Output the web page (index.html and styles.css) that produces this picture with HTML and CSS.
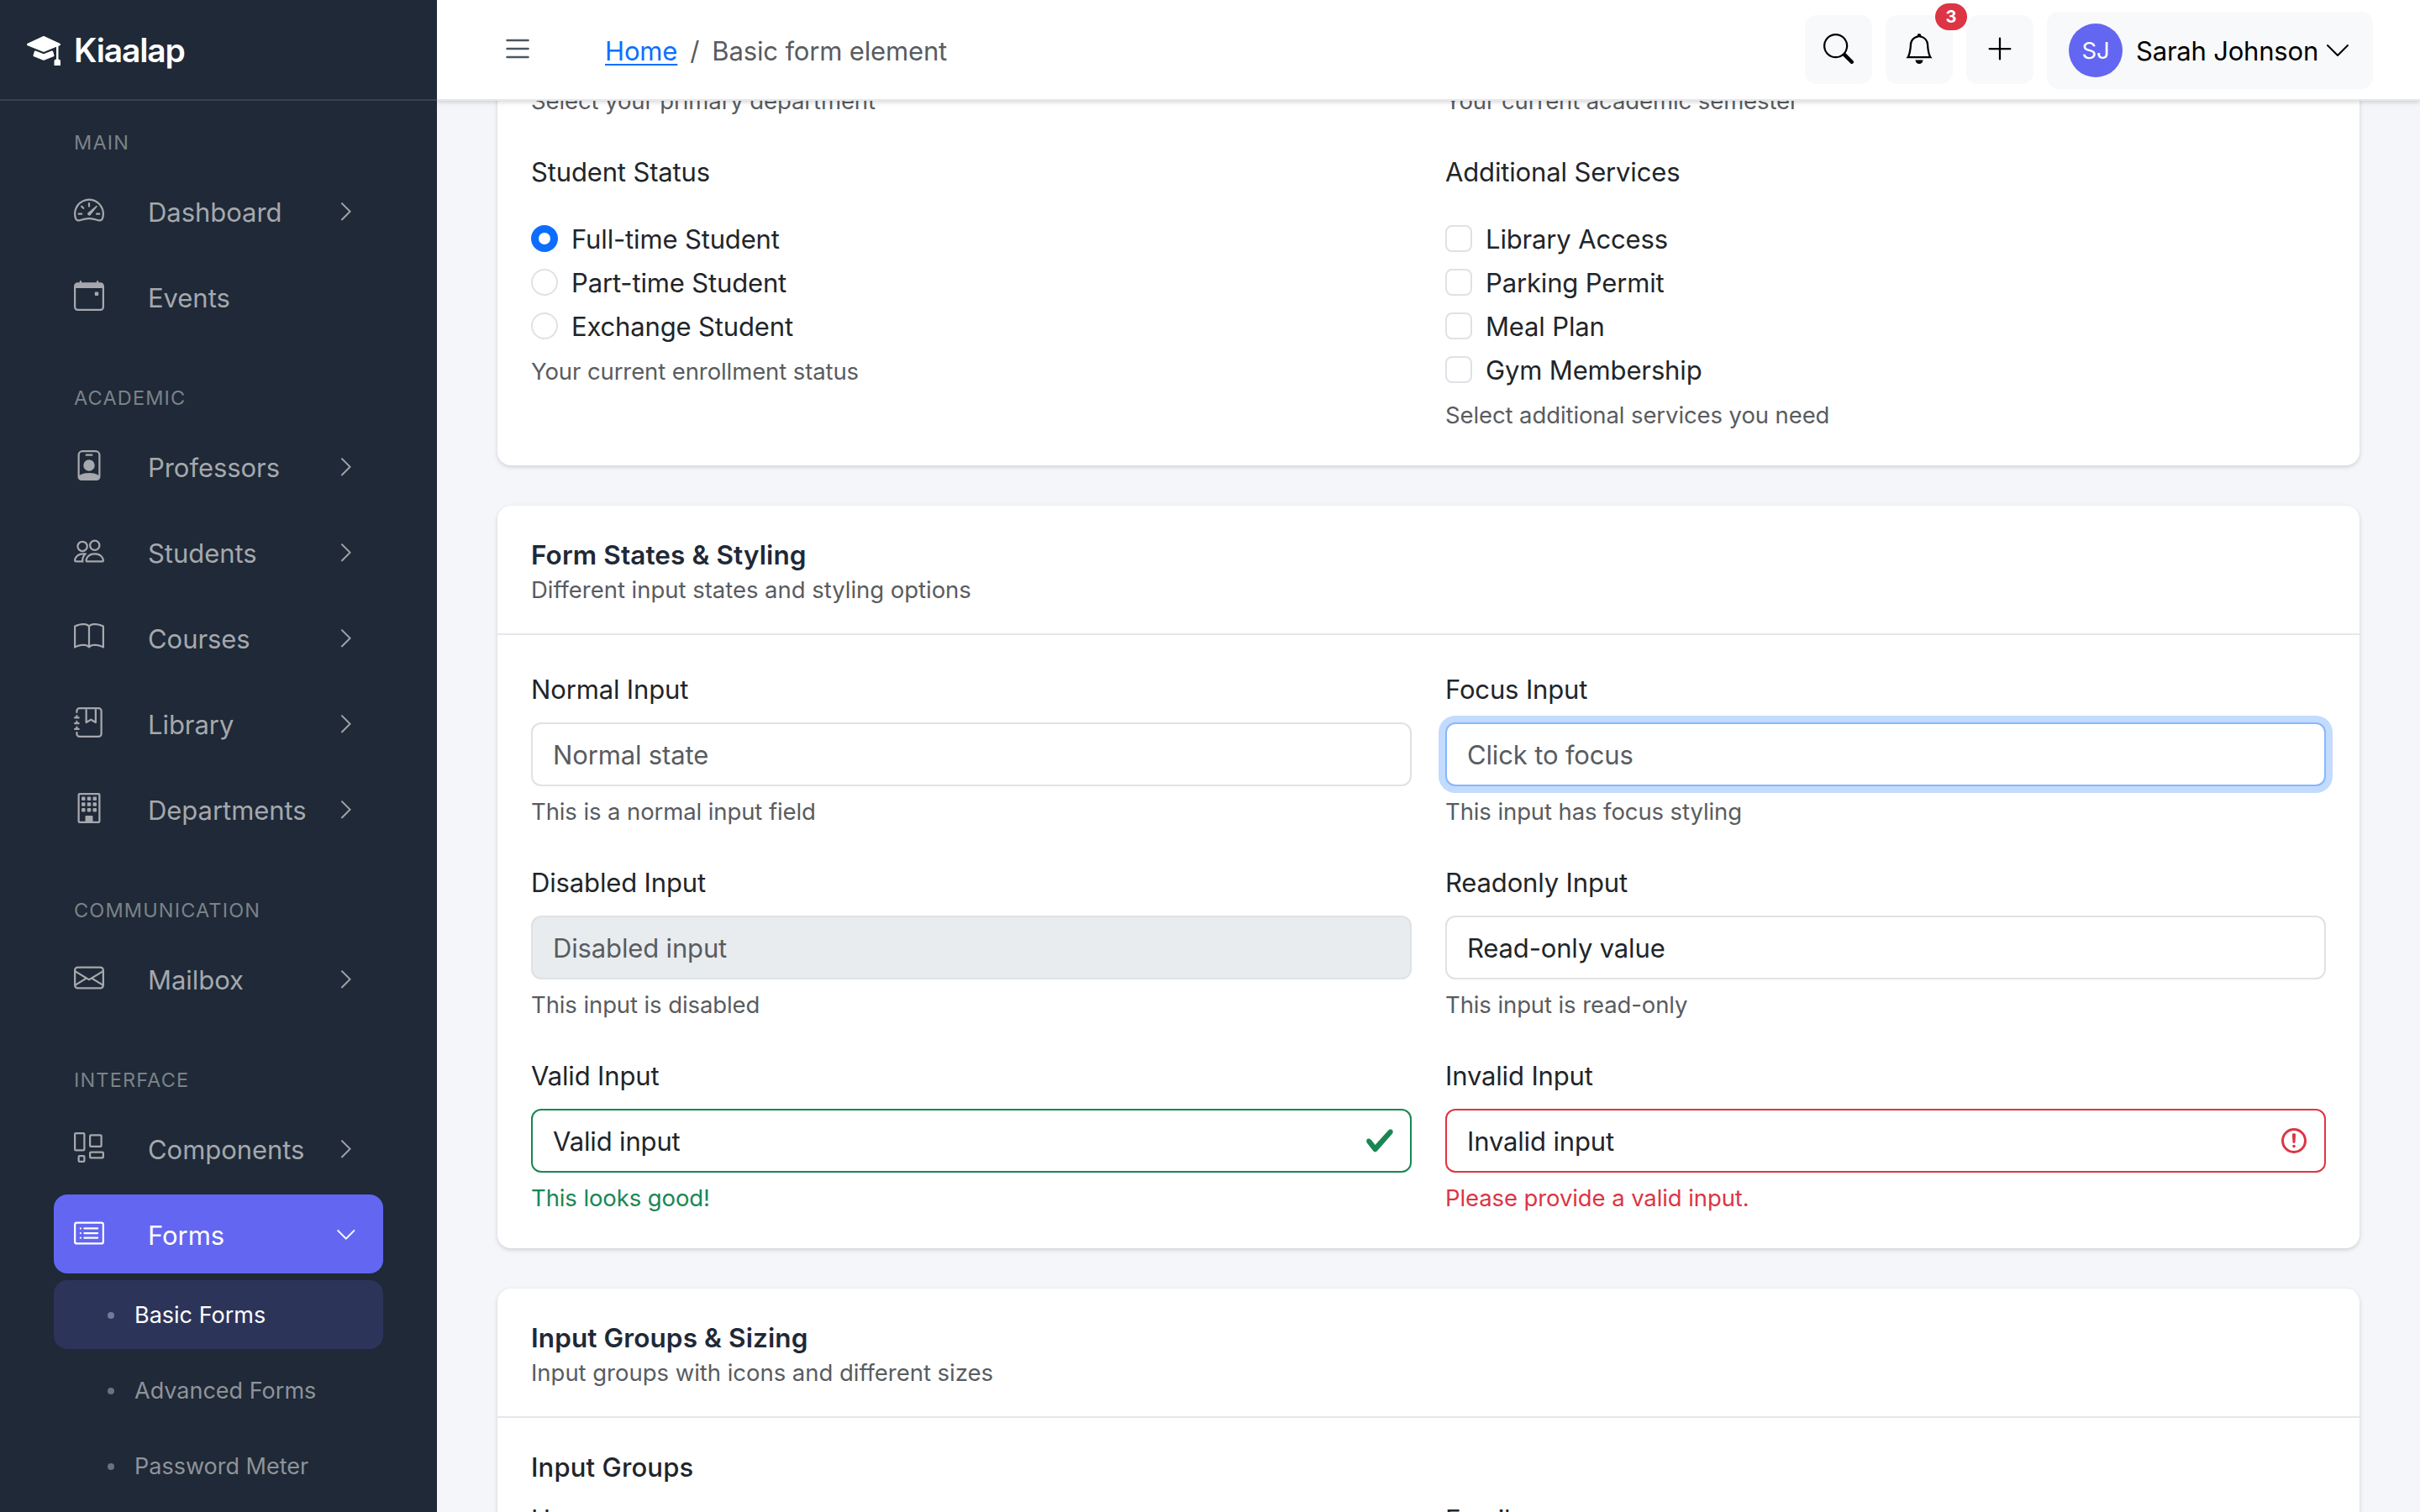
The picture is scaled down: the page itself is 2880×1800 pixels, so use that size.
FILE: index.html
```html
<!DOCTYPE html>
<html lang="en">
<head>
    <meta charset="UTF-8">
    <title>Basic form element - Kiaalap</title>
    <link rel="stylesheet" href="styles.css">
</head>
<body>

<!-- icons -->
<svg class="sprite">
    <symbol id="cap" viewBox="0 0 16 16"><path d="M8.211 2.047a.5.5 0 0 0-.422 0l-7.5 3.5a.5.5 0 0 0 .025.917l7.5 3a.5.5 0 0 0 .372 0L14 7.14V13a1 1 0 0 0-1 1v2h3v-2a1 1 0 0 0-1-1V6.739l.686-.275a.5.5 0 0 0 .025-.917z"/><path d="M4.176 9.032a.5.5 0 0 0-.656.327l-.5 1.7a.5.5 0 0 0 .294.605l4.5 1.8a.5.5 0 0 0 .372 0l4.5-1.8a.5.5 0 0 0 .294-.605l-.5-1.7a.5.5 0 0 0-.656-.327L8 10.466z"/></symbol>
    <symbol id="speedometer" viewBox="0 0 16 16"><path d="M8 4a.5.5 0 0 1 .5.5V6a.5.5 0 0 1-1 0V4.5A.5.5 0 0 1 8 4M3.732 5.732a.5.5 0 0 1 .707 0l.915.914a.5.5 0 1 1-.708.708l-.914-.915a.5.5 0 0 1 0-.707M2 10a.5.5 0 0 1 .5-.5h1.586a.5.5 0 0 1 0 1H2.5A.5.5 0 0 1 2 10m9.5 0a.5.5 0 0 1 .5-.5h1.5a.5.5 0 0 1 0 1H12a.5.5 0 0 1-.5-.5m.754-4.246a.39.39 0 0 0-.527-.02L7.547 9.31a.91.91 0 1 0 1.302 1.258l3.434-4.297a.39.39 0 0 0-.029-.518z"/><path fill-rule="evenodd" d="M0 10a8 8 0 1 1 15.547 2.661c-.442 1.253-1.845 1.602-2.932 1.25C11.309 13.488 9.475 13 8 13c-1.474 0-3.31.488-4.615.911-1.087.352-2.49.003-2.932-1.25A8 8 0 0 1 0 10m8-7a7 7 0 0 0-6.603 9.329c.203.575.923.876 1.68.63C4.397 12.533 6.358 12 8 12s3.604.532 4.923.96c.757.245 1.477-.056 1.68-.631A7 7 0 0 0 8 3"/></symbol>
    <symbol id="calendar" viewBox="0 0 16 16"><path d="M11 6.5a.5.5 0 0 1 .5-.5h1a.5.5 0 0 1 .5.5v1a.5.5 0 0 1-.5.5h-1a.5.5 0 0 1-.5-.5z"/><path d="M3.5 0a.5.5 0 0 1 .5.5V1h8V.5a.5.5 0 0 1 1 0V1h1a2 2 0 0 1 2 2v11a2 2 0 0 1-2 2H2a2 2 0 0 1-2-2V3a2 2 0 0 1 2-2h1V.5a.5.5 0 0 1 .5-.5M1 4v10a1 1 0 0 0 1 1h12a1 1 0 0 0 1-1V4z"/></symbol>
    <symbol id="badge" viewBox="0 0 16 16"><path d="M6.5 2a.5.5 0 0 0 0 1h3a.5.5 0 0 0 0-1zM11 8a3 3 0 1 1-6 0 3 3 0 0 1 6 0"/><path d="M4.5 0A2.5 2.5 0 0 0 2 2.5V14a2 2 0 0 0 2 2h8a2 2 0 0 0 2-2V2.5A2.5 2.5 0 0 0 11.5 0zM3 2.5A1.5 1.5 0 0 1 4.5 1h7A1.5 1.5 0 0 1 13 2.5v10.795a4.2 4.2 0 0 0-.776-.492C11.392 12.387 10.063 12 8 12s-3.392.387-4.224.803a4.2 4.2 0 0 0-.776.492z"/></symbol>
    <symbol id="people" viewBox="0 0 16 16"><path d="M15 14s1 0 1-1-1-4-5-4-5 3-5 4 1 1 1 1zm-7.978-1L7 12.996c.001-.264.167-1.03.76-1.72C8.312 10.629 9.282 10 11 10c1.717 0 2.687.63 3.24 1.276.593.69.758 1.457.76 1.72l-.008.002-.014.002zM11 7a2 2 0 1 0 0-4 2 2 0 0 0 0 4m3-2a3 3 0 1 1-6 0 3 3 0 0 1 6 0M6.936 9.28a6 6 0 0 0-1.23-.247A7 7 0 0 0 5 9c-4 0-5 3-5 4q0 1 1 1h4.216A2.24 2.24 0 0 1 5 13c0-1.01.377-2.042 1.09-2.904.243-.294.526-.569.846-.816M4.92 10A5.5 5.5 0 0 0 4 13H1c0-.26.164-1.03.76-1.724.545-.636 1.492-1.256 3.16-1.275zM1.5 5.5a3 3 0 1 1 6 0 3 3 0 0 1-6 0m3-2a2 2 0 1 0 0 4 2 2 0 0 0 0-4"/></symbol>
    <symbol id="book" viewBox="0 0 16 16"><path d="M1 2.828c.885-.37 2.154-.769 3.388-.893 1.33-.134 2.458.063 3.112.752v9.746c-.935-.53-2.12-.603-3.213-.493-1.18.12-2.37.461-3.287.811zm7.5-.141c.654-.689 1.782-.886 3.112-.752 1.234.124 2.503.523 3.388.893v9.923c-.918-.35-2.107-.692-3.287-.81-1.094-.111-2.278-.039-3.213.492zM8 1.783C7.015.936 5.587.81 4.287.94c-1.514.153-3.042.672-3.994 1.105A.5.5 0 0 0 0 2.5v11a.5.5 0 0 0 .707.455c.882-.4 2.303-.881 3.68-1.02 1.409-.142 2.59.087 3.223.877a.5.5 0 0 0 .78 0c.633-.79 1.814-1.019 3.222-.877 1.378.139 2.8.62 3.681 1.02A.5.5 0 0 0 16 13.5v-11a.5.5 0 0 0-.293-.455c-.952-.433-2.48-.952-3.994-1.105C10.413.809 8.985.936 8 1.783"/></symbol>
    <symbol id="journal" viewBox="0 0 16 16"><path d="M6 8V1h1v6.117L8.743 6.07a.5.5 0 0 1 .514 0L11 7.117V1h1v7a.5.5 0 0 1-.757.429L9 7.083 6.757 8.43A.5.5 0 0 1 6 8"/><path d="M3 0h10a2 2 0 0 1 2 2v12a2 2 0 0 1-2 2H3a2 2 0 0 1-2-2v-1h1v1a1 1 0 0 0 1 1h10a1 1 0 0 0 1-1V2a1 1 0 0 0-1-1H3a1 1 0 0 0-1 1v1H1V2a2 2 0 0 1 2-2"/><path d="M1 5v-.5a.5.5 0 0 1 1 0V5h.5a.5.5 0 0 1 0 1h-2a.5.5 0 0 1 0-1zm0 3v-.5a.5.5 0 0 1 1 0V8h.5a.5.5 0 0 1 0 1h-2a.5.5 0 0 1 0-1zm0 3v-.5a.5.5 0 0 1 1 0v.5h.5a.5.5 0 0 1 0 1h-2a.5.5 0 0 1 0-1z"/></symbol>
    <symbol id="building" viewBox="0 0 16 16"><path d="M2 1a1 1 0 0 1 1-1h10a1 1 0 0 1 1 1v14a1 1 0 0 1-1 1H3a1 1 0 0 1-1-1zm11 0H3v14h3v-2.500a.5.5 0 0 1 .5-.5h3a.5.5 0 0 1 .5.5V15h3z"/><rect x="4" y="2" width="2" height="2" rx=".5"/><rect x="7" y="2" width="2" height="2" rx=".5"/><rect x="10" y="2" width="2" height="2" rx=".5"/><rect x="4" y="5" width="2" height="2" rx=".5"/><rect x="7" y="5" width="2" height="2" rx=".5"/><rect x="10" y="5" width="2" height="2" rx=".5"/><rect x="4" y="8" width="2" height="2" rx=".5"/><rect x="7" y="8" width="2" height="2" rx=".5"/><rect x="10" y="8" width="2" height="2" rx=".5"/></symbol>
    <symbol id="envelope" viewBox="0 0 16 16"><path d="M0 4a2 2 0 0 1 2-2h12a2 2 0 0 1 2 2v8a2 2 0 0 1-2 2H2a2 2 0 0 1-2-2zm2-1a1 1 0 0 0-1 1v.217l7 4.2 7-4.2V4a1 1 0 0 0-1-1zm13 2.383-4.708 2.825L15 11.105zm-.034 6.876-5.64-3.471L8 9.583l-1.326-.795-5.64 3.47A1 1 0 0 0 2 13h12a1 1 0 0 0 .966-.741M1 11.105l4.708-2.897L1 5.383z"/></symbol>
    <symbol id="blocks" viewBox="0 0 16 16"><g fill="none" stroke="currentColor"><rect x=".5" y=".5" width="5" height="9" rx=".5"/><rect x="8.5" y="1.5" width="6" height="6" rx=".5"/><rect x="8.5" y="10.5" width="7" height="3" rx=".5"/><rect x="2.5" y="12.5" width="3" height="3" rx=".5"/></g></symbol>
    <symbol id="cardlist" viewBox="0 0 16 16"><path d="M14.5 3a.5.5 0 0 1 .5.5v9a.5.5 0 0 1-.5.5h-13a.5.5 0 0 1-.5-.5v-9a.5.5 0 0 1 .5-.5zm-13-1A1.5 1.5 0 0 0 0 3.5v9A1.5 1.5 0 0 0 1.5 14h13a1.5 1.5 0 0 0 1.5-1.5v-9A1.5 1.5 0 0 0 14.5 2z"/><path d="M5 8a.5.5 0 0 1 .5-.5h7a.5.5 0 0 1 0 1h-7A.5.5 0 0 1 5 8m0-2.5a.5.5 0 0 1 .5-.5h7a.5.5 0 0 1 0 1h-7a.5.5 0 0 1-.5-.5m0 5a.5.5 0 0 1 .5-.5h7a.5.5 0 0 1 0 1h-7a.5.5 0 0 1-.5-.5m-1-5a.5.5 0 1 1-1 0 .5.5 0 0 1 1 0M4 8a.5.5 0 1 1-1 0 .5.5 0 0 1 1 0m0 2.5a.5.5 0 1 1-1 0 .5.5 0 0 1 1 0"/></symbol>
    <symbol id="right" viewBox="0 0 16 16"><path d="M4.646 1.646a.5.5 0 0 1 .708 0l6 6a.5.5 0 0 1 0 .708l-6 6a.5.5 0 0 1-.708-.708L10.293 8 4.646 2.354a.5.5 0 0 1 0-.708"/></symbol>
    <symbol id="down" viewBox="0 0 16 16"><path d="M1.646 4.646a.5.5 0 0 1 .708 0L8 10.293l5.646-5.647a.5.5 0 0 1 .708.708l-6 6a.5.5 0 0 1-.708 0l-6-6a.5.5 0 0 1 0-.708"/></symbol>
    <symbol id="list" viewBox="0 0 16 16"><path d="M2.5 12a.5.5 0 0 1 .5-.5h10a.5.5 0 0 1 0 1H3a.5.5 0 0 1-.5-.5m0-4a.5.5 0 0 1 .5-.5h10a.5.5 0 0 1 0 1H3a.5.5 0 0 1-.5-.5m0-4a.5.5 0 0 1 .5-.5h10a.5.5 0 0 1 0 1H3a.5.5 0 0 1-.5-.5"/></symbol>
    <symbol id="search" viewBox="0 0 16 16"><path d="M11.742 10.344a6.5 6.5 0 1 0-1.397 1.398h-.001q.044.06.098.115l3.85 3.85a1 1 0 0 0 1.415-1.414l-3.85-3.85a1 1 0 0 0-.115-.1zM12 6.5a5.5 5.5 0 1 1-11 0 5.5 5.5 0 0 1 11 0"/></symbol>
    <symbol id="bell" viewBox="0 0 16 16"><path d="M8 16a2 2 0 0 0 2-2H6a2 2 0 0 0 2 2M8 1.918l-.797.161A4 4 0 0 0 4 6c0 .628-.134 2.197-.459 3.742-.16.767-.376 1.566-.663 2.258h10.244c-.287-.692-.502-1.49-.663-2.258C12.134 8.197 12 6.628 12 6a4 4 0 0 0-3.203-3.92zM14.22 12c.223.447.481.801.78 1H1c.299-.199.557-.553.78-1C2.68 10.2 3 6.88 3 6c0-2.42 1.72-4.44 4.005-4.901a1 1 0 1 1 1.99 0A5 5 0 0 1 13 6c0 .88.32 4.2 1.22 6"/></symbol>
    <symbol id="plus" viewBox="0 0 16 16"><path d="M8 2a.5.5 0 0 1 .5.5v5h5a.5.5 0 0 1 0 1h-5v5a.5.5 0 0 1-1 0v-5h-5a.5.5 0 0 1 0-1h5v-5A.5.5 0 0 1 8 2"/></symbol>
</svg>

<aside class="sidebar">
    <div class="brand">
        <svg><use href="#cap"/></svg>
        <span>Kiaalap</span>
    </div>
    <nav>
        <h6 class="first">MAIN</h6>
        <a class="item"><svg class="icon"><use href="#speedometer"/></svg><span>Dashboard</span><svg class="arrow"><use href="#right"/></svg></a>
        <a class="item"><svg class="icon"><use href="#calendar"/></svg><span>Events</span></a>
        <h6>ACADEMIC</h6>
        <a class="item"><svg class="icon"><use href="#badge"/></svg><span>Professors</span><svg class="arrow"><use href="#right"/></svg></a>
        <a class="item"><svg class="icon"><use href="#people"/></svg><span>Students</span><svg class="arrow"><use href="#right"/></svg></a>
        <a class="item"><svg class="icon"><use href="#book"/></svg><span>Courses</span><svg class="arrow"><use href="#right"/></svg></a>
        <a class="item"><svg class="icon"><use href="#journal"/></svg><span>Library</span><svg class="arrow"><use href="#right"/></svg></a>
        <a class="item"><svg class="icon"><use href="#building"/></svg><span>Departments</span><svg class="arrow"><use href="#right"/></svg></a>
        <h6>COMMUNICATION</h6>
        <a class="item"><svg class="icon"><use href="#envelope"/></svg><span>Mailbox</span><svg class="arrow"><use href="#right"/></svg></a>
        <h6>INTERFACE</h6>
        <a class="item"><svg class="icon"><use href="#blocks"/></svg><span>Components</span><svg class="arrow"><use href="#right"/></svg></a>
        <a class="item active"><svg class="icon"><use href="#cardlist"/></svg><span>Forms</span><svg class="arrow"><use href="#down"/></svg></a>
        <a class="sub active">Basic Forms</a>
        <a class="sub">Advanced Forms</a>
        <a class="sub">Password Meter</a>
    </nav>
</aside>

<div class="main">
    <header class="topbar">
        <svg class="toggle"><use href="#list"/></svg>
        <div class="breadcrumb"><a href="#">Home</a><span class="slash">/</span><span>Basic form element</span></div>
        <div class="tools">
            <div class="tool"><svg><use href="#search"/></svg></div>
            <div class="tool"><svg><use href="#bell"/></svg><span class="count">3</span></div>
            <div class="tool"><svg><use href="#plus"/></svg></div>
            <div class="profile"><span class="avatar">SJ</span><span class="name">Sarah Johnson</span><svg><use href="#down"/></svg></div>
        </div>
    </header>

    <div class="content">
        <section class="card scrolled">
            <div class="row">
                <div>
                    <div class="help">Select your primary department</div>
                    <div class="group-label">Student Status</div>
                    <label class="check"><input type="radio" name="status" checked>Full-time Student</label>
                    <label class="check"><input type="radio" name="status">Part-time Student</label>
                    <label class="check"><input type="radio" name="status">Exchange Student</label>
                    <div class="help">Your current enrollment status</div>
                </div>
                <div>
                    <div class="help">Your current academic semester</div>
                    <div class="group-label">Additional Services</div>
                    <label class="check"><input type="checkbox">Library Access</label>
                    <label class="check"><input type="checkbox">Parking Permit</label>
                    <label class="check"><input type="checkbox">Meal Plan</label>
                    <label class="check"><input type="checkbox">Gym Membership</label>
                    <div class="help">Select additional services you need</div>
                </div>
            </div>
        </section>

        <section class="card">
            <div class="card-header">
                <h5>Form States &amp; Styling</h5>
                <p>Different input states and styling options</p>
            </div>
            <div class="card-body row">
                <div class="field">
                    <label>Normal Input</label>
                    <div class="control"><input type="text" placeholder="Normal state"></div>
                    <div class="help">This is a normal input field</div>
                </div>
                <div class="field">
                    <label>Focus Input</label>
                    <div class="control"><input type="text" class="focus" placeholder="Click to focus"></div>
                    <div class="help">This input has focus styling</div>
                </div>
                <div class="field">
                    <label>Disabled Input</label>
                    <div class="control"><input type="text" placeholder="Disabled input" disabled></div>
                    <div class="help">This input is disabled</div>
                </div>
                <div class="field">
                    <label>Readonly Input</label>
                    <div class="control"><input type="text" value="Read-only value" readonly></div>
                    <div class="help">This input is read-only</div>
                </div>
                <div class="field">
                    <label>Valid Input</label>
                    <div class="control">
                        <input type="text" class="valid" value="Valid input">
                        <svg viewBox="0 0 8 8"><path fill="#198754" d="M2.3 6.73.6 4.53c-.4-1.04.46-1.4 1.1-.8l1.1 1.4 3.4-3.8c.6-.63 1.6-.27 1.2.7l-4 4.6c-.43.5-.8.4-1.1.1z"/></svg>
                    </div>
                    <div class="help good">This looks good!</div>
                </div>
                <div class="field">
                    <label>Invalid Input</label>
                    <div class="control">
                        <input type="text" class="invalid" value="Invalid input">
                        <svg viewBox="0 0 12 12" fill="none" stroke="#dc3545"><circle cx="6" cy="6" r="4.5"/><path stroke-linejoin="round" d="M5.8 3.6h.4L6 6.5z"/><circle cx="6" cy="8.2" r=".6" fill="#dc3545" stroke="none"/></svg>
                    </div>
                    <div class="help bad">Please provide a valid input.</div>
                </div>
            </div>
        </section>

        <section class="card">
            <div class="card-header">
                <h5>Input Groups &amp; Sizing</h5>
                <p>Input groups with icons and different sizes</p>
            </div>
            <div class="card-body">
                <h6>Input Groups</h6>
                <div class="row">
                    <div class="field"><label>Username</label></div>
                    <div class="field"><label>Email</label></div>
                </div>
            </div>
        </section>
    </div>
</div>

</body>
</html>
```
FILE: styles.css
```css
* {
    box-sizing: border-box;
    margin: 0;
    padding: 0;
}

body {
    display: flex;
    height: 1800px;
    overflow: hidden;
    background-color: #f5f6fa;
    color: #212529;
    font-family: Inter, "Liberation Sans", sans-serif;
    font-size: 31px;
    letter-spacing: -0.15px;
    line-height: 48px;
}

svg {
    display: block;
    flex: none;
    fill: currentColor;
}

.sprite {
    display: none;
}

/* sidebar */
.sidebar {
    flex: none;
    width: 520px;
    height: 1800px;
    overflow: hidden;
    background-color: #1f2937;
    letter-spacing: 0;
}

.brand {
    display: flex;
    align-items: center;
    height: 120px;
    padding: 0 32px 2px;
    border-bottom: 2px solid #374151;
    color: #fff;
    font-size: 39px;
    font-weight: 600;
    letter-spacing: -1.15px;
}

.brand svg {
    width: 40px;
    height: 40px;
    margin-right: 16px;
}

.brand span {
    margin-top: 3px;
}

.sidebar nav {
    padding: 0 64px;
}

.sidebar h6 {
    height: 100px;
    padding: 48px 24px 0;
    color: #7b8288;
    font-size: 23.5px;
    font-weight: 400;
    letter-spacing: 1.15px;
    line-height: 36px;
}

.sidebar h6.first {
    height: 84px;
    padding-top: 32px;
}

.item {
    display: flex;
    align-items: center;
    height: 94px;
    margin-bottom: 8px;
    padding: 0 31px 0 24px;
    border-radius: 16px;
    color: #a5a8ad;
}

.item span {
    flex: 1;
    padding-top: 3px;
    letter-spacing: -0.05px;
}

.item .icon {
    width: 36px;
    height: 36px;
    margin: 0 52px 2px 0;
}

.item .arrow {
    width: 25.6px;
    height: 25.6px;
    margin-top: 2px;
    stroke: currentColor;
    stroke-width: 0.3;
}

.item.active {
    background-color: #6366f1;
    color: #fff;
}

.sub {
    display: flex;
    align-items: center;
    height: 82px;
    margin-bottom: 8px;
    padding: 2px 0 0 64px;
    border-radius: 16px;
    color: #8f9399;
    font-size: 27px;
}

.sub::before {
    content: "";
    width: 8px;
    height: 8px;
    margin: 0 24px 0 0;
    border-radius: 50%;
    background-color: #6b727d;
}

.sub.active {
    background-color: #2d345a;
    color: #fff;
}

.sub.active::before {
    background-color: #757a98;
}

/* top bar */
.main {
    flex: 1;
    height: 1800px;
    overflow: hidden;
}

.topbar {
    position: relative;
    z-index: 2;
    display: flex;
    align-items: center;
    height: 120px;
    padding: 0 56px 0 76px;
    border-bottom: 2px solid #e5e7eb;
    background-color: #fff;
    box-shadow: 0 2px 6px rgba(0, 0, 0, 0.1), 0 2px 4px rgba(0, 0, 0, 0.06);
}

.toggle {
    width: 40px;
    height: 40px;
    margin-bottom: 2px;
    color: #4b5563;
}

.breadcrumb {
    display: flex;
    margin: 4px 0 0 84px;
    color: #595c5f;
}

.breadcrumb a {
    color: #0d6efd;
    text-underline-offset: 4px;
    text-decoration-thickness: 2px;
}

.breadcrumb .slash {
    padding: 0 15px;
}

.tools {
    display: flex;
    align-items: center;
    gap: 16px;
    margin-left: auto;
    color: #000;
}

.tool {
    position: relative;
    width: 80px;
    height: 82px;
    padding: 22px;
    border-radius: 14px;
    background-color: #f8f9fa;
}

.tool svg {
    width: 36px;
    height: 36px;
}

.count {
    position: absolute;
    top: -14px;
    right: -17px;
    width: 38px;
    height: 32px;
    border-radius: 16px;
    background-color: #dc3545;
    color: #fff;
    font-size: 20px;
    font-weight: 700;
    line-height: 32px;
    text-align: center;
}

.profile {
    display: flex;
    align-items: center;
    height: 92px;
    margin-top: 2px;
    padding: 0 26px;
    border-radius: 14px;
    background-color: #f8f9fa;
}

.avatar {
    width: 64px;
    height: 64px;
    margin-right: 16px;
    border-radius: 50%;
    background-color: #6366f1;
    color: #fff;
    font-size: 27.5px;
    line-height: 65px;
    text-align: center;
}

.name {
    width: 224px;
    padding-top: 2px;
    white-space: nowrap;
    letter-spacing: -0.2px;
}

.profile svg {
    width: 32px;
    height: 32px;
}

/* cards */
.content {
    margin-top: -22px;
    padding: 0 72px;
}

.card {
    margin-bottom: 48px;
    border-radius: 16px;
    background-color: #fff;
    box-shadow: 0 2px 6px rgba(0, 0, 0, 0.1), 0 2px 4px rgba(0, 0, 0, 0.06);
}

.card.scrolled {
    height: 456px;
    padding: 0 40px;
}

.card-header {
    height: 154px;
    padding: 40px 40px 32px;
    border-bottom: 2px solid #e5e7eb;
}

.card-header h5 {
    color: #1f2937;
    font-size: 31.5px;
    font-weight: 600;
    letter-spacing: 0.1px;
    line-height: 38px;
}

.card-header p, .help {
    color: #595c5f;
    font-size: 27.5px;
    letter-spacing: -0.1px;
    line-height: 42px;
}

.card-header p {
    padding-top: 1px;
    letter-spacing: -0.03px;
}

.card-body {
    padding: 40px;
}

.card-body h6 {
    height: 56px;
    font-size: 31px;
    font-weight: 500;
    letter-spacing: 0.15px;
    line-height: 38px;
}

.row {
    display: grid;
    grid-template-columns: 1fr 1fr;
    gap: 40px;
}

.help {
    height: 42px;
    margin-top: 8px;
    padding-top: 1px;
}

.row .help:first-child {
    margin-top: 0;
}

.group-label {
    height: 48px;
    margin: 40px 0 32px;
    padding-top: 1px;
}

.check {
    display: flex;
    height: 48px;
    margin-bottom: 4px;
    line-height: 50px;
}

.check:nth-last-child(2) {
    margin-bottom: 0;
}

.check input {
    appearance: none;
    width: 32px;
    height: 32px;
    margin: 8px 16px 0 0;
    border: 2px solid #dee2e6;
    border-radius: 8px;
    background-color: #fff;
}

.check input[type="radio"] {
    border-radius: 50%;
}

.check input:checked {
    border: 9px solid #0d6efd;
}

/* text fields */
.field label {
    display: block;
    height: 48px;
    margin-bottom: 16px;
    padding-top: 1px;
}

.control {
    position: relative;
}

.control input {
    display: block;
    width: 100%;
    height: 76px;
    padding: 0 24px;
    border: 2px solid #dee2e6;
    border-radius: 12px;
    background-color: #fff;
    color: #212529;
    font: inherit;
    letter-spacing: inherit;
    outline: none;
}

.control input::placeholder {
    color: #595c5f;
}

.control input:disabled {
    background-color: #e9ecef;
}

.control input.focus {
    border-color: #86b7fe;
    box-shadow: 0 0 0 8px #c2dbfe;
}

.control input.valid {
    border-color: #198754;
}

.control input.invalid {
    border-color: #dc3545;
}

.control svg {
    position: absolute;
    top: 20px;
    right: 20px;
    width: 36px;
    height: 36px;
}

.control svg[fill="none"] {
    fill: none;
}

.help.good {
    color: #198754;
}

.help.bad {
    color: #dc3545;
}
```
